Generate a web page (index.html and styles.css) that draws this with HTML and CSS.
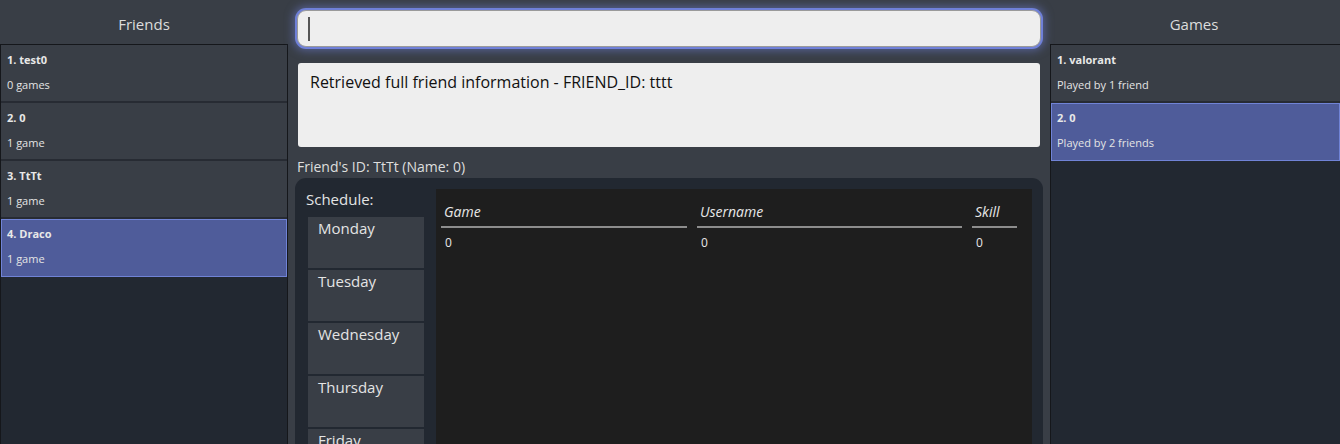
FILE: index.html
```html
<!DOCTYPE html>
<html>
<head>
<meta charset="utf-8">
<link rel="stylesheet" href="styles.css">
</head>
<body>
<div class="app">
  <aside class="side side-left">
    <div class="side-title">Friends</div>
    <div class="list">
      <div class="item"><div class="item-name">1. test0</div><div class="item-sub">0 games</div></div>
      <div class="item"><div class="item-name">2. 0</div><div class="item-sub">1 game</div></div>
      <div class="item"><div class="item-name">3. TtTt</div><div class="item-sub">1 game</div></div>
      <div class="item selected"><div class="item-name">4. Draco</div><div class="item-sub">1 game</div></div>
    </div>
  </aside>

  <main class="center">
    <div class="search"><span class="caret"></span></div>
    <div class="result">Retrieved full friend information - FRIEND_ID: tttt</div>
    <div class="friend-label">Friend's ID: TtTt (Name: 0)</div>
    <div class="detail">
      <div class="schedule">
        <div class="schedule-title">Schedule:</div>
        <div class="day">Monday</div>
        <div class="day">Tuesday</div>
        <div class="day">Wednesday</div>
        <div class="day">Thursday</div>
        <div class="day">Friday</div>
      </div>
      <div class="table">
        <div class="th">Game</div>
        <div class="th">Username</div>
        <div class="th">Skill</div>
        <div class="td">0</div>
        <div class="td">0</div>
        <div class="td">0</div>
      </div>
    </div>
  </main>

  <aside class="side side-right">
    <div class="side-title">Games</div>
    <div class="list">
      <div class="item"><div class="item-name">1. valorant</div><div class="item-sub">Played by 1 friend</div></div>
      <div class="item selected"><div class="item-name">2. 0</div><div class="item-sub">Played by 2 friends</div></div>
    </div>
  </aside>
</div>
</body>
</html>
```

FILE: styles.css
```css
* { box-sizing: border-box; }
html, body {
  margin: 0;
  height: 100%;
  overflow: hidden;
}
body {
  background: #393e46;
  font-family: "Open Sans", "DejaVu Sans", sans-serif;
  color: #e4e4e4;
}
.app {
  display: grid;
  grid-template-columns: 288px 1fr 290px;
  height: 444px;
}
.side {
  display: flex;
  flex-direction: column;
  min-height: 0;
}
.side-title {
  height: 44px;
  display: flex;
  align-items: center;
  justify-content: center;
  font-size: 15px;
  color: #dcdcdc;
  padding-top: 3px;
}
.side-right .side-title {
  margin-left: -2px;
}
.list {
  flex: 1;
  background: #222831;
  border: 1px solid #15171b;
  border-bottom: none;
}
.side-right .list {
  border-right: none;
}
.item {
  height: 58px;
  padding: 7px 6px 0;
  background: #393e46;
  border-bottom: 2px solid #272b33;
}
.item.selected {
  background: #4f5c9a;
  border: 1px solid #7083d6;
  padding: 6px 5px 0;
}
.item-name {
  font-size: 11px;
  font-weight: 700;
  line-height: 16px;
  color: #e8e8e8;
}
.item-sub {
  font-size: 11px;
  line-height: 16px;
  margin-top: 9px;
  color: #e4e4e4;
}
.center {
  display: flex;
  flex-direction: column;
  padding: 10px 7px 0 7px;
  min-width: 0;
}
.search {
  height: 37px;
  margin: 0 2px;
  background: #eeeeee;
  border-radius: 9px;
  border: 1px solid #9a9a9a;
  box-shadow: 0 0 0 2px #6f80d8, 0 0 8px 4px rgba(111, 128, 216, 0.5);
  display: flex;
  align-items: center;
  padding-left: 10px;
}
.caret {
  width: 2px;
  height: 24px;
  background: #555;
}
.result {
  margin: 16px 3px 0;
  height: 84px;
  background: #eeeeee;
  border-radius: 3px;
  color: #111;
  font-size: 16px;
  line-height: 22px;
  padding: 8px 12px;
}
.friend-label {
  margin: 10px 2px 0;
  font-size: 14px;
  line-height: 20px;
  color: #dedede;
}
.detail {
  flex: 1;
  margin-top: 1px;
  background: #222831;
  border-radius: 11px 11px 0 0;
  display: flex;
  gap: 12px;
  padding: 11px 11px 0 11px;
  min-height: 0;
  overflow: hidden;
}
.schedule {
  width: 118px;
  display: flex;
  flex-direction: column;
  gap: 2px;
}
.schedule-title {
  font-size: 15px;
  line-height: 20px;
  color: #e4e4e4;
  height: 26px;
  margin-top: 0;
}
.day {
  flex: none;
  height: 51px;
  margin-left: 2px;
  background: #393e46;
  font-size: 15px;
  line-height: 20px;
  padding: 1px 10px;
  color: #e4e4e4;
}
.table {
  flex: 1;
  background: #1e1e1e;
  display: grid;
  grid-template-columns: 246px 265px 45px;
  grid-auto-rows: min-content;
  column-gap: 10px;
  padding: 12px 0 0 5px;
}
.th {
  font-style: italic;
  font-size: 14px;
  line-height: 22px;
  color: #e8e8e8;
  padding: 0 3px 3px;
  border-bottom: 2px solid #8d8d8d;
}
.td {
  font-size: 12px;
  line-height: 18px;
  padding: 6px 4px;
  color: #e8e8e8;
}
```
